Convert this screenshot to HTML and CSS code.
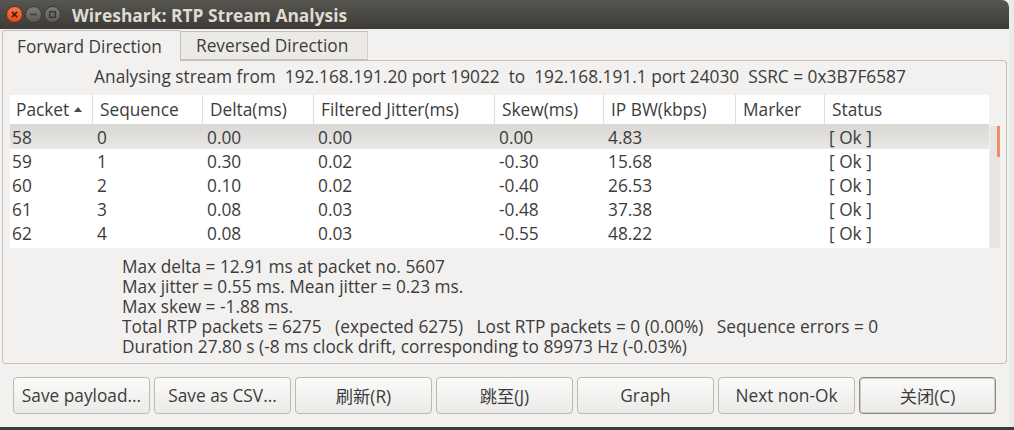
FILE: index.html
```html
<!DOCTYPE html>
<html lang="en">
<head>
  <meta charset="UTF-8">
  <title>Wireshark: RTP Stream Analysis</title>
  <link rel="stylesheet" href="styles.css">
</head>
<body>
  <div class="screen">
    <div class="window">

      <!-- Title bar -->
      <div class="titlebar">
        <div class="wm-buttons">
          <span class="wm close">
            <svg viewBox="0 0 16 16"><path d="M5.2 5.2l5.6 5.6M10.8 5.2l-5.6 5.6"/></svg>
          </span>
          <span class="wm">
            <svg viewBox="0 0 16 16"><path d="M4.5 8h7"/></svg>
          </span>
          <span class="wm">
            <svg viewBox="0 0 16 16"><rect x="5" y="5" width="6" height="6"/></svg>
          </span>
        </div>
        <div class="title">Wireshark: RTP Stream Analysis</div>
      </div>

      <div class="content">
        <!-- Direction tabs -->
        <div class="tabs">
          <div class="tab active">Forward Direction</div>
          <div class="tab">Reversed Direction</div>
        </div>

        <div class="pane">
          <div class="stream-info">Analysing stream from  192.168.191.20 port 19022  to  192.168.191.1 port 24030  SSRC = 0x3B7F6587</div>

          <div class="table-area">
            <div class="table">
              <div class="row head">
                <div class="cell">Packet <span class="sort-up"></span></div>
                <div class="cell">Sequence</div>
                <div class="cell">Delta(ms)</div>
                <div class="cell">Filtered Jitter(ms)</div>
                <div class="cell">Skew(ms)</div>
                <div class="cell">IP BW(kbps)</div>
                <div class="cell">Marker</div>
                <div class="cell">Status</div>
              </div>
              <div class="row selected">
                <div class="cell">58</div><div class="cell">0</div><div class="cell">0.00</div><div class="cell">0.00</div>
                <div class="cell">0.00</div><div class="cell">4.83</div><div class="cell"></div><div class="cell">[ Ok ]</div>
              </div>
              <div class="row">
                <div class="cell">59</div><div class="cell">1</div><div class="cell">0.30</div><div class="cell">0.02</div>
                <div class="cell">-0.30</div><div class="cell">15.68</div><div class="cell"></div><div class="cell">[ Ok ]</div>
              </div>
              <div class="row">
                <div class="cell">60</div><div class="cell">2</div><div class="cell">0.10</div><div class="cell">0.02</div>
                <div class="cell">-0.40</div><div class="cell">26.53</div><div class="cell"></div><div class="cell">[ Ok ]</div>
              </div>
              <div class="row">
                <div class="cell">61</div><div class="cell">3</div><div class="cell">0.08</div><div class="cell">0.03</div>
                <div class="cell">-0.48</div><div class="cell">37.38</div><div class="cell"></div><div class="cell">[ Ok ]</div>
              </div>
              <div class="row">
                <div class="cell">62</div><div class="cell">4</div><div class="cell">0.08</div><div class="cell">0.03</div>
                <div class="cell">-0.55</div><div class="cell">48.22</div><div class="cell"></div><div class="cell">[ Ok ]</div>
              </div>
            </div>
            <div class="scrollbar"><div class="thumb"></div></div>
          </div>

          <div class="stats">
            <div class="line">Max delta = 12.91 ms at packet no. 5607</div>
            <div class="line">Max jitter = 0.55 ms. Mean jitter = 0.23 ms.</div>
            <div class="line">Max skew = -1.88 ms.</div>
            <div class="line">Total RTP packets = 6275   (expected 6275)   Lost RTP packets = 0 (0.00%)   Sequence errors = 0</div>
            <div class="line">Duration 27.80 s (-8 ms clock drift, corresponding to 89973 Hz (-0.03%)</div>
          </div>
        </div>

        <!-- Dialog buttons -->
        <div class="buttons">
          <button class="btn">Save payload...</button>
          <button class="btn">Save as CSV...</button>
          <button class="btn">刷新(R)</button>
          <button class="btn">跳至(J)</button>
          <button class="btn">Graph</button>
          <button class="btn">Next non-Ok</button>
          <button class="btn default">关闭(C)</button>
        </div>
      </div>
    </div>
    <div class="desktop-strip"></div>
  </div>
</body>
</html>
```

FILE: styles.css
```css
:root {
  --bg: #f2f1f0;
  --text: #3c3c3c;
  --border: #c4c1bc;
  --font: "Open Sans", "Noto Sans CJK SC", sans-serif;
}

* {
  box-sizing: border-box;
  margin: 0;
  padding: 0;
}

body {
  width: 1014px;
  height: 430px;
  overflow: hidden;
  background: #ebeae8;
  font-family: var(--font);
  font-size: 17.3px;
  color: var(--text);
}

.screen {
  display: flex;
  flex-direction: column;
}

/* === Window === */
.window {
  width: 1009px;
  height: 427px;
  background: var(--bg);
  display: flex;
  flex-direction: column;
}

.titlebar {
  height: 29px;
  background: linear-gradient(#57554f, #3c3b37);
  border-radius: 0 7px 0 0;
  display: flex;
  align-items: center;
  padding-left: 6px;
}
.wm-buttons {
  display: flex;
  gap: 2px;
}
.wm {
  width: 17px;
  height: 17px;
  border-radius: 50%;
  background: linear-gradient(#7d7b75, #5d5b56);
  border: 1px solid #38372f;
  display: flex;
  align-items: center;
  justify-content: center;
}
.wm svg {
  width: 15px;
  height: 15px;
  fill: none;
  stroke: #3a3935;
  stroke-width: 1.6;
}
.wm.close {
  background: linear-gradient(#f47a50, #de4a1c);
  border-color: #6d2a13;
}
.wm.close svg {
  stroke: #4a1a0a;
}
.title {
  margin-left: 11px;
  color: #dfdbd2;
  font-weight: bold;
  font-size: 17.4px;
}

.content {
  flex: 1;
  display: flex;
  flex-direction: column;
}

/* === Tabs === */
.tabs {
  display: flex;
  padding-left: 2px;
  height: 31px;
  align-items: flex-end;
}
.tab {
  height: 29px;
  display: flex;
  align-items: center;
  border-top: 1px solid var(--border);
  border-right: 1px solid #d3d0cb;
  border-bottom: 1px solid var(--border);
  background: #eceae7;
}
.tab.active {
  height: 31px;
  width: 179px;
  padding-left: 14px;
  border: 1px solid var(--border);
  border-bottom: none;
  border-radius: 3px 3px 0 0;
  background: var(--bg);
  position: relative;
  z-index: 1;
  margin-bottom: -1px;
}
.tab:not(.active) {
  width: 187px;
  padding-left: 15px;
}

.pane {
  margin: 0 2px 0 2px;
  height: 304px;
  border: 1px solid var(--border);
  border-radius: 0 3px 3px 3px;
  padding: 0 6px 0 7px;
  display: flex;
  flex-direction: column;
}

.stream-info {
  white-space: pre;
  text-align: center;
  height: 34px;
  line-height: 32px;
  padding-right: 10px;
}

/* === Packet table === */
.table-area {
  display: flex;
  gap: 1px;
  height: 153px;
}
.table {
  width: 979px;
  background: #fff;
}
.row {
  display: grid;
  grid-template-columns: 83px 110px 111px 181px 109px 132px 89px 164px;
  height: 24px;
  align-items: center;
}
.row .cell {
  padding-left: 4px;
  white-space: nowrap;
}
.row .cell:first-child {
  padding-left: 2px;
}
.row.head {
  height: 30px;
  border-bottom: 1px solid #dddbd8;
  align-items: stretch;
}
.row.head .cell {
  display: flex;
  align-items: center;
  padding-left: 7px;
  border-right: 1px solid #dfddda;
}
.row.head .cell:first-child {
  padding-left: 6px;
}
.row.head .cell:last-child {
  border-right: none;
}
.sort-up {
  display: inline-block;
  margin-left: 5px;
  border-left: 4px solid transparent;
  border-right: 4px solid transparent;
  border-bottom: 5px solid #4c4c4c;
}
.row.selected {
  background: linear-gradient(#d9d8d5, #e9e8e6);
}

.scrollbar {
  width: 10px;
  margin-top: 31px;
  background: #e6e5e3;
  display: flex;
  justify-content: flex-end;
}
.thumb {
  width: 3px;
  height: 31px;
  background: #f08b64;
}

/* === Summary === */
.stats {
  padding-left: 112px;
  padding-top: 9px;
}
.stats .line {
  height: 20px;
  line-height: 20px;
  white-space: pre;
}

/* === Bottom buttons === */
.buttons {
  display: flex;
  gap: 4px;
  padding: 13px 0 0 13px;
}
.btn {
  width: 137px;
  height: 37px;
  font-family: var(--font);
  font-size: 17.3px;
  color: var(--text);
  background: linear-gradient(#fbfbfa, #ebeae8);
  border: 1px solid #bcb8b3;
  border-radius: 4px;
}
.btn.default {
  border: 1px solid #8e8a85;
  box-shadow: inset 0 0 0 1px #cfccc7;
}

.desktop-strip {
  height: 3px;
  background: #3b3a37;
}
```
